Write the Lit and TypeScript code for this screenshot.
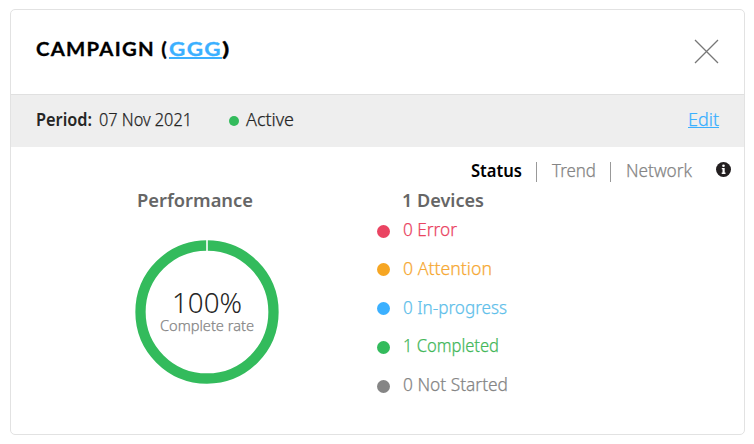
import { LitElement, html, svg, css } from "lit";
import { customElement, property } from "lit/decorators.js";

/** A single line of text set to a fixed measure; the host's font and colour apply. */
@customElement("fit-text")
class FitText extends LitElement {
  @property() text = "";
  @property({ type: Number }) measure = 50;
  @property({ type: Number }) line = 24;
  @property({ type: Number }) base = 18;
  static styles = css`
    :host { display: block; flex: none; }
    svg { display: block; overflow: visible; }
    text { fill: currentColor; stroke: currentColor; stroke-width: var(--heft, 0.25px); }
  `;
  render() {
    return html`<svg width=${this.measure} height=${this.line}>
      ${svg`<text x="0" y=${this.base} textLength=${this.measure} lengthAdjust="spacingAndGlyphs">${this.text}</text>`}
    </svg>`;
  }
}

const STATES = [
  { label: "0 Error", w: 54, dot: "#ea4462", ink: "#ea4462" },
  { label: "0 Attention", w: 89, dot: "#f6a623", ink: "#f6a935" },
  { label: "0 In-progress", w: 104, dot: "#3bb0ff", ink: "#60c0ea" },
  { label: "1 Completed", w: 96, dot: "#33bb5c", ink: "#43b75a" },
  { label: "0 Not Started", w: 105, dot: "#858585", ink: "#858585" },
];

@customElement("app-root")
class AppRoot extends LitElement {
  static styles = css`
    :host {
      display: block;
      box-sizing: border-box;
      height: 444px;
      padding: 9px 9px 9px 10px;
      background: #fff;
      font-family: "Noto Sans", "Open Sans", sans-serif;
      font-size: 18px;
      font-weight: 300;
      color: #252525;
    }
    .card {
      box-sizing: border-box;
      height: 426px;
      border: 1px solid #e2e2e2;
      border-radius: 5px;
    }
    header {
      display: flex;
      justify-content: space-between;
      box-sizing: border-box;
      height: 85px;
      padding: 28px 25px 0;
      border-bottom: 1px solid #e0e0e0;
    }
    .title {
      --heft: 0.3px;
      display: flex;
      font-family: Lato, sans-serif;
      font-size: 19.5px;
      font-weight: 700;
      letter-spacing: 1.2px;
      color: #000;
    }
    .title .link { height: 19px; margin-left: 1px; border-bottom: 2px solid #3bb0ff; color: #3bb0ff; }
    .close { margin: 1px 0 0; }
    svg { display: block; flex: none; }
    .band {
      display: flex;
      box-sizing: border-box;
      height: 52px;
      padding: 13px 25px 0;
      background: #eee;
    }
    .bold { --heft: 0; font-weight: 600; }
    .date { margin-left: 7px; }
    .live { width: 10px; height: 10px; margin: 8px 7px 0 37px; border-radius: 50%; background: #33bb5c; }
    .edit { height: 19px; margin-left: auto; border-bottom: 1px solid #3bb0ff; color: #3bb0ff; }
    .tabs {
      display: flex;
      justify-content: flex-end;
      height: 40px;
      box-sizing: border-box;
      padding: 12px 13px 0 0;
      color: #858585;
    }
    .tabs .on { --heft: 0; color: #000; font-weight: 600; }
    .sep { width: 1px; height: 20px; margin: 3px 15px 0 14px; background: #999; }
    .info { margin: 3px 0 0 24px; }
    .body { display: flex; }
    .perf { display: flex; flex-direction: column; width: 391px; }
    h2 { --heft: 0; margin: 2px 0 0; font-size: 18px; font-weight: 600; color: #666; }
    .perf h2 { margin-left: 126px; }
    .ring { display: grid; width: 144px; margin: 27px 0 0 124px; }
    .ring > * { grid-area: 1 / 1; }
    .reading { display: flex; flex-direction: column; align-items: center; padding-top: 44px; }
    .pct { --heft: 0; font-size: 28px; }
    .rate { font-size: 15px; color: #858585; }
    .states h2 { margin-bottom: 5px; }
    .row { display: flex; height: 38.75px; }
    .dot { width: 13px; height: 13px; margin: 6.5px 12.5px 0 -25px; border-radius: 50%; }
  `;

  render() {
    return html`<main class="card">
      <header>
        <div class="title">
          <fit-text text="CAMPAIGN (" measure="132"></fit-text>
          <fit-text class="link" text="GGG" measure="53" line="19"></fit-text>
          <fit-text text=")" measure="9"></fit-text>
        </div>
        <svg class="close" width="25" height="25" viewBox="0 0 25 25">
          <path d="M1 1L24 24M24 1L1 24" stroke="#777" stroke-width="1.3" fill="none" />
        </svg>
      </header>
      <section class="band">
        <fit-text class="bold" text="Period:" measure="56"></fit-text>
        <fit-text class="date" text="07 Nov 2021" measure="93"></fit-text>
        <span class="live"></span>
        <fit-text text="Active" measure="48"></fit-text>
        <fit-text class="edit" text="Edit" measure="31" line="19"></fit-text>
      </section>
      <nav class="tabs">
        <fit-text class="on" text="Status" measure="51"></fit-text>
        <span class="sep"></span>
        <fit-text text="Trend" measure="44"></fit-text>
        <span class="sep"></span>
        <fit-text text="Network" measure="66"></fit-text>
        <svg class="info" width="15" height="15" viewBox="0 0 15 15">
          <circle cx="7.5" cy="7.5" r="7.5" fill="#231f20" />
          <circle cx="7.5" cy="3.8" r="1.3" fill="#fff" />
          <path d="M5.8 6H8.7V10.5H9.5V11.9H5.7V10.5H6.5V7.3H5.8Z" fill="#fff" />
        </svg>
      </nav>
      <section class="body">
        <div class="perf">
          <h2><fit-text text="Performance" measure="116"></fit-text></h2>
          <div class="ring">
            <svg width="144" height="144" viewBox="0 0 144 144">
              <circle cx="72" cy="72" r="66.5" fill="none" stroke="#33bb5c" stroke-width="10.3" />
              <path d="M72 0V11" stroke="#fff" stroke-width="1.6" />
            </svg>
            <div class="reading">
              <fit-text class="pct" text="100%" measure="70" line="30" base="29"></fit-text>
              <fit-text class="rate" text="Complete rate" measure="94" line="24" base="17"></fit-text>
            </div>
          </div>
        </div>
        <div class="states">
          <h2><fit-text text="1 Devices" measure="82"></fit-text></h2>
          ${STATES.map(
            (s) => html`<div class="row">
              <span class="dot" style="background:${s.dot}"></span>
              <fit-text style="color:${s.ink}" text=${s.label} measure=${s.w}></fit-text>
            </div>`
          )}
        </div>
      </section>
    </main>`;
  }
}
